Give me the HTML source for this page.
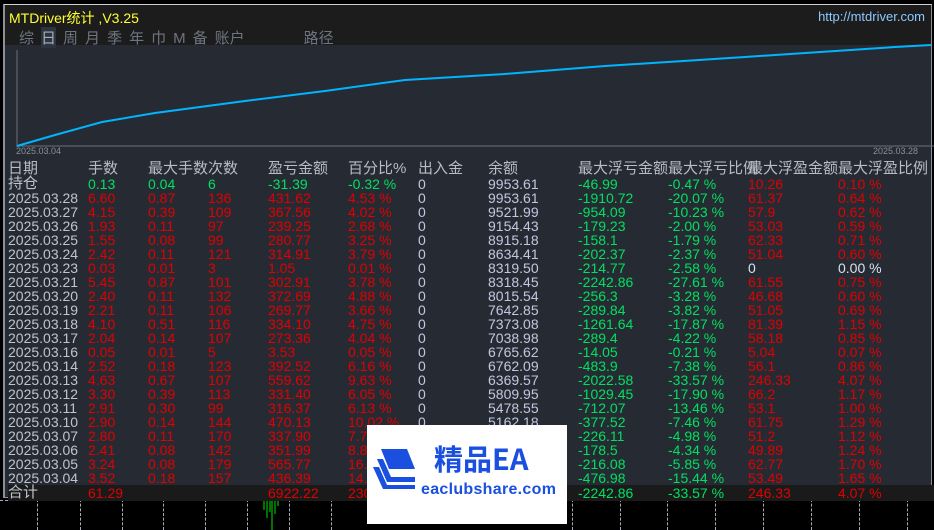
<!DOCTYPE html>
<html><head><meta charset="utf-8"><style>
*{margin:0;padding:0;box-sizing:border-box}
body{width:934px;height:530px;background:#000;position:relative;overflow:hidden;font-family:"Liberation Sans","Noto Sans CJK SC",sans-serif}
.panel{position:absolute;left:3px;top:4px;width:929px;height:494px;background:#262b33;border:1px solid #8a8f98;border-top:1px solid #d0d0d0;border-left:2px solid #8a8f98}
.top{position:absolute;left:0;top:0;width:100%;height:40px;background:#1c1c1c}
.title{position:absolute;left:4px;top:3px;color:#ffff33;font-size:14px}
.url{position:absolute;right:6px;top:4px;color:#8ec8ff;font-size:13px}
.tabs{position:absolute;left:14px;top:22px;color:#6e7480;font-size:15px}
.tabs span{display:inline-block;margin-right:7px}
.tabs .on{background:#2c3440;color:#a8b0bc}
svg{position:absolute;left:0;top:0}
.dl{position:absolute;top:141px;font-size:9px;color:#8a8f98}
table{position:absolute;left:3px;top:156px;border-collapse:collapse;font-size:14px;table-layout:fixed;width:926px}
td{height:14px;line-height:14px;padding:0;white-space:nowrap;overflow:visible;color:#e00000}
tr.h td{color:#b8bcc4;font-size:15px;height:16px;line-height:16px}
td.d{color:#c0c4cc}td.z{color:#c0c8e0}td.b{color:#c0c8e0}td.g{color:#00e060}td.w{color:#d8e0f0}
tr.t td{background:#1a1a1a;height:16px}
.wm{position:absolute;left:367px;top:425px;width:200px;height:99px;background:#fff}
.wm .cn{position:absolute;left:67px;top:16px;font-size:29px;font-weight:bold;color:#1a4fe0;font-family:"Noto Sans CJK SC","Liberation Sans",sans-serif;line-height:34px}
.wm .en{position:absolute;left:54px;top:56px;font-size:16px;font-weight:bold;color:#1a4fe0;letter-spacing:0.3px}
.grid{position:absolute;top:499px;height:31px;border-left:1px dashed #aab}
</style></head><body>
<div class="grid" style="left:37px"></div><div class="grid" style="left:80px"></div><div class="grid" style="left:122px"></div><div class="grid" style="left:163px"></div><div class="grid" style="left:205px"></div><div class="grid" style="left:247px"></div><div class="grid" style="left:289px"></div><div class="grid" style="left:331px"></div><div class="grid" style="left:572px"></div><div class="grid" style="left:620px"></div><div class="grid" style="left:667px"></div><div class="grid" style="left:715px"></div><div class="grid" style="left:763px"></div><div class="grid" style="left:811px"></div><div class="grid" style="left:859px"></div><div class="grid" style="left:907px"></div>
<div style="position:absolute;left:0;top:500px;width:934px;height:1px;border-top:1px dashed #aab"></div>
<svg width="934" height="530"><g stroke="#00e000" stroke-width="1"><line x1="264" y1="498" x2="264" y2="510"/><line x1="267" y1="498" x2="267" y2="518"/><line x1="270" y1="498" x2="270" y2="512"/><line x1="272" y1="498" x2="272" y2="530"/><line x1="275" y1="498" x2="275" y2="514"/><line x1="278" y1="498" x2="278" y2="506"/></g></svg>
<div class="panel">
<div class="top">
<div class="title">MTDriver统计 ,V3.25</div>
<div class="url">http://mtdriver.com</div>
<div class="tabs"><span>综</span><span class="on">日</span><span>周</span><span>月</span><span>季</span><span>年</span><span>巾</span><span>M</span><span>备</span><span>账户</span><span style="margin-left:52px">路径</span></div>
</div>
<svg width="929" height="160"><line x1="12" y1="45" x2="12" y2="142" stroke="#6a7078"/><line x1="12" y1="141" x2="929" y2="141" stroke="#6a7078"/>
<polyline fill="none" stroke="#00b4ff" stroke-width="2" points="12,141 50,130 97,117 150,108 240,96 320,86 400,75 500,69 600,61 740,52 890,42 926,40"/></svg>
<div class="dl" style="left:11px">2025.03.04</div><div class="dl" style="left:868px">2025.03.28</div>
<table>
<colgroup><col style="width:80px"><col style="width:60px"><col style="width:60px"><col style="width:60px"><col style="width:80px"><col style="width:70px"><col style="width:70px"><col style="width:90px"><col style="width:90px"><col style="width:80px"><col style="width:90px"><col style="width:96px"></colgroup>
<tr class="h"><td>日期</td><td>手数</td><td>最大手数</td><td>次数</td><td>盈亏金额</td><td>百分比%</td><td>出入金</td><td>余额</td><td>最大浮亏金额</td><td>最大浮亏比例</td><td>最大浮盈金额</td><td>最大浮盈比例</td></tr>
<tr><td class="d" style="font-size:15px">持仓</td><td class="g">0.13</td><td class="g">0.04</td><td class="g">6</td><td class="g">-31.39</td><td class="g">-0.32 %</td><td class="z">0</td><td class="b">9953.61</td><td class="g">-46.99</td><td class="g">-0.47 %</td><td>10.26</td><td>0.10 %</td></tr>
<tr><td class="d">2025.03.28</td><td>6.60</td><td>0.87</td><td>136</td><td>431.62</td><td>4.53 %</td><td class="z">0</td><td class="b">9953.61</td><td class="g">-1910.72</td><td class="g">-20.07 %</td><td>61.37</td><td>0.64 %</td></tr>
<tr><td class="d">2025.03.27</td><td>4.15</td><td>0.39</td><td>109</td><td>367.56</td><td>4.02 %</td><td class="z">0</td><td class="b">9521.99</td><td class="g">-954.09</td><td class="g">-10.23 %</td><td>57.9</td><td>0.62 %</td></tr>
<tr><td class="d">2025.03.26</td><td>1.93</td><td>0.11</td><td>97</td><td>239.25</td><td>2.68 %</td><td class="z">0</td><td class="b">9154.43</td><td class="g">-179.23</td><td class="g">-2.00 %</td><td>53.03</td><td>0.59 %</td></tr>
<tr><td class="d">2025.03.25</td><td>1.55</td><td>0.08</td><td>99</td><td>280.77</td><td>3.25 %</td><td class="z">0</td><td class="b">8915.18</td><td class="g">-158.1</td><td class="g">-1.79 %</td><td>62.33</td><td>0.71 %</td></tr>
<tr><td class="d">2025.03.24</td><td>2.42</td><td>0.11</td><td>121</td><td>314.91</td><td>3.79 %</td><td class="z">0</td><td class="b">8634.41</td><td class="g">-202.37</td><td class="g">-2.37 %</td><td>51.04</td><td>0.60 %</td></tr>
<tr><td class="d">2025.03.23</td><td>0.03</td><td>0.01</td><td>3</td><td>1.05</td><td>0.01 %</td><td class="z">0</td><td class="b">8319.50</td><td class="g">-214.77</td><td class="g">-2.58 %</td><td class="w">0</td><td class="w">0.00 %</td></tr>
<tr><td class="d">2025.03.21</td><td>5.45</td><td>0.87</td><td>101</td><td>302.91</td><td>3.78 %</td><td class="z">0</td><td class="b">8318.45</td><td class="g">-2242.86</td><td class="g">-27.61 %</td><td>61.55</td><td>0.75 %</td></tr>
<tr><td class="d">2025.03.20</td><td>2.40</td><td>0.11</td><td>132</td><td>372.69</td><td>4.88 %</td><td class="z">0</td><td class="b">8015.54</td><td class="g">-256.3</td><td class="g">-3.28 %</td><td>46.68</td><td>0.60 %</td></tr>
<tr><td class="d">2025.03.19</td><td>2.21</td><td>0.11</td><td>106</td><td>269.77</td><td>3.66 %</td><td class="z">0</td><td class="b">7642.85</td><td class="g">-289.84</td><td class="g">-3.82 %</td><td>51.05</td><td>0.69 %</td></tr>
<tr><td class="d">2025.03.18</td><td>4.10</td><td>0.51</td><td>116</td><td>334.10</td><td>4.75 %</td><td class="z">0</td><td class="b">7373.08</td><td class="g">-1261.64</td><td class="g">-17.87 %</td><td>81.39</td><td>1.15 %</td></tr>
<tr><td class="d">2025.03.17</td><td>2.04</td><td>0.14</td><td>107</td><td>273.36</td><td>4.04 %</td><td class="z">0</td><td class="b">7038.98</td><td class="g">-289.4</td><td class="g">-4.22 %</td><td>58.18</td><td>0.85 %</td></tr>
<tr><td class="d">2025.03.16</td><td>0.05</td><td>0.01</td><td>5</td><td>3.53</td><td>0.05 %</td><td class="z">0</td><td class="b">6765.62</td><td class="g">-14.05</td><td class="g">-0.21 %</td><td>5.04</td><td>0.07 %</td></tr>
<tr><td class="d">2025.03.14</td><td>2.52</td><td>0.18</td><td>123</td><td>392.52</td><td>6.16 %</td><td class="z">0</td><td class="b">6762.09</td><td class="g">-483.9</td><td class="g">-7.38 %</td><td>56.1</td><td>0.86 %</td></tr>
<tr><td class="d">2025.03.13</td><td>4.63</td><td>0.67</td><td>107</td><td>559.62</td><td>9.63 %</td><td class="z">0</td><td class="b">6369.57</td><td class="g">-2022.58</td><td class="g">-33.57 %</td><td>246.33</td><td>4.07 %</td></tr>
<tr><td class="d">2025.03.12</td><td>3.30</td><td>0.39</td><td>113</td><td>331.40</td><td>6.05 %</td><td class="z">0</td><td class="b">5809.95</td><td class="g">-1029.45</td><td class="g">-17.90 %</td><td>66.2</td><td>1.17 %</td></tr>
<tr><td class="d">2025.03.11</td><td>2.91</td><td>0.30</td><td>99</td><td>316.37</td><td>6.13 %</td><td class="z">0</td><td class="b">5478.55</td><td class="g">-712.07</td><td class="g">-13.46 %</td><td>53.1</td><td>1.00 %</td></tr>
<tr><td class="d">2025.03.10</td><td>2.90</td><td>0.14</td><td>144</td><td>470.13</td><td>10.02 %</td><td class="z">0</td><td class="b">5162.18</td><td class="g">-377.52</td><td class="g">-7.46 %</td><td>61.75</td><td>1.29 %</td></tr>
<tr><td class="d">2025.03.07</td><td>2.80</td><td>0.11</td><td>170</td><td>337.90</td><td>7.75 %</td><td class="z">0</td><td class="b">4692.05</td><td class="g">-226.11</td><td class="g">-4.98 %</td><td>51.2</td><td>1.12 %</td></tr>
<tr><td class="d">2025.03.06</td><td>2.41</td><td>0.08</td><td>142</td><td>351.99</td><td>8.80 %</td><td class="z">0</td><td class="b">4354.15</td><td class="g">-178.5</td><td class="g">-4.34 %</td><td>49.89</td><td>1.24 %</td></tr>
<tr><td class="d">2025.03.05</td><td>3.24</td><td>0.08</td><td>179</td><td>565.77</td><td>16.43 %</td><td class="z">0</td><td class="b">4002.16</td><td class="g">-216.08</td><td class="g">-5.85 %</td><td>62.77</td><td>1.70 %</td></tr>
<tr><td class="d">2025.03.04</td><td>3.52</td><td>0.18</td><td>157</td><td>436.39</td><td>14.55 %</td><td class="z">0</td><td class="b">3436.39</td><td class="g">-476.98</td><td class="g">-15.44 %</td><td>53.49</td><td>1.65 %</td></tr>
<tr class="t"><td class="d" style="font-size:15px">合计</td><td>61.29</td><td></td><td></td><td>6922.22</td><td>230.78 %</td><td></td><td></td><td class="g">-2242.86</td><td class="g">-33.57 %</td><td>246.33</td><td>4.07 %</td></tr>
</table>
</div>
<div class="wm">
<svg width="60" height="99"><g fill="#1a4fe0"><path d="M14 24 L40 24 L48 44 L22 44 Z"/><path d="M10 34 L16 34 L24 52 L48 52 L48 57 L20 57 Z"/><path d="M6 42 L12 42 L20 60 L48 60 L48 64 L16 64 Z"/></g></svg>
<div class="cn">精品EA</div>
<div class="en">eaclubshare.com</div>
</div>
</body></html>
